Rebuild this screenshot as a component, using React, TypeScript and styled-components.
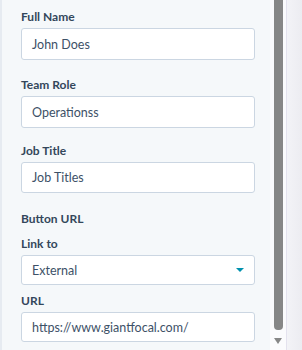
import React from "react";
import styled, { createGlobalStyle } from "styled-components";

const Global = createGlobalStyle`
  html, body { margin: 0; padding: 0; }
  body { width: 302px; height: 350px; overflow: hidden; background: #f5f8fa; font-family: "Lato", "Open Sans", sans-serif; }
`;

const Page = styled.div`
  display: flex;
  width: 302px;
  height: 350px;
`;

const Panel = styled.div`
  width: 270px;
  height: 350px;
  box-sizing: border-box;
  background: #f5f8fa;
  border-left: 2px solid #e6ebf1;
  padding: 9px 0 0 19px;
  display: flex;
  flex-direction: column;
`;

const Gutter = styled.div`
  width: 16px;
  height: 350px;
  background: #fbfbfd;
  display: flex;
  flex-direction: column;
  padding-left: 4px;
  box-sizing: border-box;
  align-items: flex-start;
`;

const Thumb = styled.div`
  width: 9px;
  height: 330px;
  background: #878787;
  border-radius: 0 0 4px 4px;
`;

const Arrow = styled.div`
  margin-top: 8px;
  width: 0;
  height: 0;
  border-left: 4.5px solid transparent;
  border-right: 4.5px solid transparent;
  border-top: 6px solid #878787;
`;

const Strip = styled.div`
  flex: 1;
  height: 350px;
  border-left: 1px solid #e4e2ee;
  background: linear-gradient(to right, #f3f3f7, #ececf1);
`;

const Field = styled.div<{ $gap?: number }>`
  display: flex;
  flex-direction: column;
  margin-bottom: ${(p) => p.$gap ?? 17}px;
`;

const Label = styled.div`
  font-size: 12px;
  line-height: 16px;
  font-weight: 700;
  color: #33475b;
  margin-bottom: 3px;
`;

const Heading = styled(Label)`
  margin-bottom: 0;
`;

const Input = styled.div<{ $h?: number }>`
  width: 234px;
  height: ${(p) => p.$h ?? 32}px;
  box-sizing: border-box;
  background: #fff;
  border: 1px solid #cbd6e2;
  border-radius: 3px;
  padding: 0 10px;
  display: flex;
  align-items: center;
  font-size: 12.5px;
  color: #3d5167;
  white-space: nowrap;
  overflow: hidden;
`;

const Select = styled(Input)`
  justify-content: space-between;
  padding-right: 10px;
`;

const Caret = styled.span`
  width: 0;
  height: 0;
  border-left: 4px solid transparent;
  border-right: 4px solid transparent;
  border-top: 4px solid #0091ae;
`;

export default function App() {
  return (
    <Page>
      <Global />
      <Panel>
        <Field>
          <Label>Full Name</Label>
          <Input>John Does</Input>
        </Field>
        <Field $gap={15}>
          <Label>Team Role</Label>
          <Input>Operationss</Input>
        </Field>
        <Field $gap={18}>
          <Label>Job Title</Label>
          <Input $h={31}>Job Titles</Input>
        </Field>
        <Field $gap={9}>
          <Heading>Button URL</Heading>
        </Field>
        <Field $gap={8}>
          <Label>Link to</Label>
          <Select $h={30}>
            External
            <Caret />
          </Select>
        </Field>
        <Field>
          <Label>URL</Label>
          <Input $h={30}>https://www.giantfocal.com/</Input>
        </Field>
      </Panel>
      <Gutter>
        <Thumb />
        <Arrow />
      </Gutter>
      <Strip />
    </Page>
  );
}
